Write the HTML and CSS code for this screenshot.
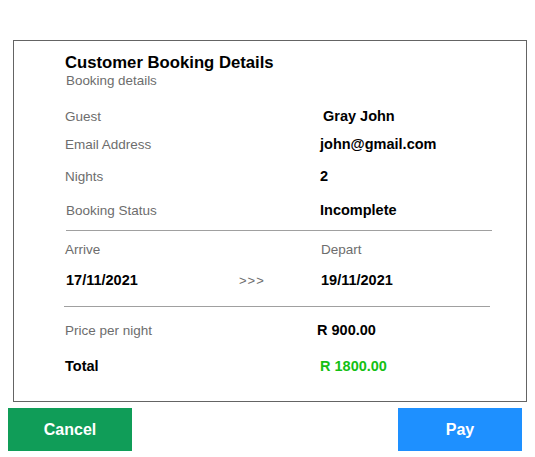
FILE: index.html
```html
<!DOCTYPE html>
<html>
<head>
<meta charset="utf-8">
<link rel="stylesheet" href="styles.css">
</head>
<body>
<div class="page">
  <section class="card">
    <header class="head">
      <h1 class="title">Customer Booking Details</h1>
      <p class="subtitle">Booking details</p>
    </header>
    <div class="row r-guest"><span class="label">Guest</span><span class="value v-guest">Gray John</span></div>
    <div class="row r-email"><span class="label">Email Address</span><span class="value">john@gmail.com</span></div>
    <div class="row r-nights"><span class="label">Nights</span><span class="value">2</span></div>
    <div class="row r-status"><span class="label l-status">Booking Status</span><span class="value">Incomplete</span></div>
    <hr class="rule rule-1">
    <div class="row r-arrive"><span class="label">Arrive</span><span class="label l-depart">Depart</span></div>
    <div class="dates">
      <span class="value d-arrive">17/11/2021</span>
      <span class="arrow">&gt;&gt;&gt;</span>
      <span class="value">19/11/2021</span>
    </div>
    <hr class="rule rule-2">
    <div class="row r-price"><span class="label">Price per night</span><span class="value v-price">R 900.00</span></div>
    <div class="row r-total"><span class="value">Total</span><span class="value v-total">R 1800.00</span></div>
  </section>
  <div class="actions">
    <button class="btn btn-cancel">Cancel</button>
    <button class="btn btn-pay">Pay</button>
  </div>
</div>
</body>
</html>
```
FILE: styles.css
```css
html, body {
  margin: 0;
  padding: 0;
  background: #ffffff;
}
body {
  font-family: "Liberation Sans", Arial, sans-serif;
  color: #000;
}
.page {
  padding-top: 40px;
}
.card {
  box-sizing: border-box;
  width: 514px;
  margin-left: 13px;
  border: 1px solid #646464;
  padding: 12px 0 25px 51px;
  display: flex;
  flex-direction: column;
}
.head {
  display: flex;
  flex-direction: column;
}
.title {
  margin: 0;
  font-size: 16.7px;
  font-weight: bold;
  line-height: 20px;
}
.subtitle {
  margin: 0;
  font-size: 13.4px;
  line-height: 16px;
  color: #6d6d6d;
  padding-left: 1px;
}
.row {
  display: grid;
  grid-template-columns: 255px 1fr;
  height: 20px;
  align-items: center;
}
.label {
  font-size: 13.5px;
  color: #6d6d6d;
}
.value {
  font-size: 14.5px;
  font-weight: bold;
  color: #000;
}
.r-guest { margin-top: 17px; }
.r-email { margin-top: 8px; }
.r-nights { margin-top: 12px; }
.r-status { margin-top: 14px; }
.l-status { padding-left: 1px; }
.v-guest { padding-left: 3px; }
.rule {
  border: 0;
  height: 1px;
  background: #a0a0a0;
  margin: 0;
}
.rule-1 {
  margin-top: 10px;
  margin-left: 1px;
  width: 426px;
}
.r-arrive { margin-top: 8px; }
.l-depart { padding-left: 1px; }
.dates {
  display: grid;
  grid-template-columns: 174px 82px 1fr;
  height: 20px;
  align-items: center;
  margin-top: 11px;
}
.d-arrive { padding-left: 1px; }
.arrow {
  font-size: 13px;
  color: #6d6d6d;
  letter-spacing: 1px;
}
.rule-2 {
  margin-top: 16px;
  margin-left: -1px;
  width: 426px;
}
.r-price { margin-top: 13px; }
.v-price { margin-left: -3px; }
.r-total { margin-top: 16px; }
.v-total { color: #14c014; }
.actions {
  display: flex;
  justify-content: space-between;
  margin-top: 6px;
  padding: 0 13px 0 8px;
}
.btn {
  width: 124px;
  height: 43px;
  border: 0;
  margin: 0;
  padding: 0;
  color: #fff;
  font-family: "Liberation Sans", Arial, sans-serif;
  font-size: 16px;
  font-weight: bold;
}
.btn-cancel { background: #109d58; }
.btn-pay { background: #1e90ff; }
```
